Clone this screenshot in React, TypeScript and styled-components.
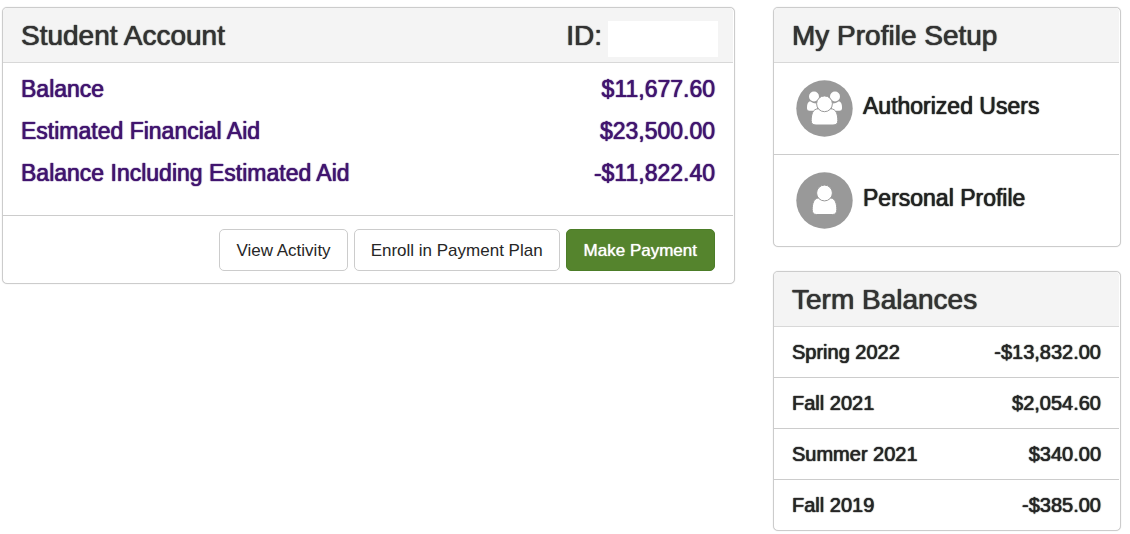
import React from "react";
import styled, { createGlobalStyle } from "styled-components";

const GlobalStyle = createGlobalStyle`
  *, *::before, *::after { box-sizing: border-box; }
  body {
    margin: 0;
    background: #fff;
    color: #262626;
    font-family: "Liberation Sans", Arial, sans-serif;
  }
`;

const mediumWeight = "0 0 1px currentColor, 0 0 1px currentColor";

const Page = styled.main`
  display: grid;
  grid-template-columns: minmax(0, 733fr) minmax(0, 348fr);
  align-items: start;
  gap: 38px;
  padding: 7px 9px 3px 2px;
`;

const Column = styled.div`
  display: flex;
  flex-direction: column;
  gap: 24px;
`;

const Card = styled.section`
  padding-right: 1px;
  background: #fff;
  border: 1px solid #ccc;
  border-radius: 5px;
  box-shadow: 0 0 1px #ccc;
`;

const CardHeader = styled.header`
  display: flex;
  align-items: center;
  justify-content: space-between;
  height: 55px;
  padding: 2px 15px 0 18px;
  background: #f4f4f4;
  border-bottom: 1px solid #d8d8d8;
  border-radius: 4px 4px 0 0;
`;

const Title = styled.h2`
  margin: 0;
  color: #333;
  font-size: 28px;
  line-height: 36px;
  font-weight: 400;
  text-shadow: ${mediumWeight};
`;

const IdGroup = styled.div`
  display: flex;
  align-items: center;
  gap: 6px;
`;

const IdValue = styled.span`
  width: 110px;
  height: 36px;
  margin-top: 6px;
  background: #fff;
`;

const BalanceTable = styled.table`
  width: 100%;
  margin: 5px 0 21px;
  border-collapse: collapse;
  color: #41146f;
  font-size: 23px;
  line-height: 26px;
  text-shadow: ${mediumWeight};

  th, td { padding: 8px 18px; }
  th { font-weight: 400; text-align: left; }
  td { text-align: right; }
`;

const Actions = styled.footer`
  display: flex;
  justify-content: flex-end;
  gap: 6px;
  padding: 13px 18px 12px;
  border-top: 1px solid #ccc;
`;

const Button = styled.button<{ $primary?: boolean }>`
  height: 42px;
  padding: 2px ${(p) => (p.$primary ? 17 : 16)}px 0;
  border: 1px solid ${(p) => (p.$primary ? "#4c7d28" : "#ccc")};
  border-radius: 5px;
  background: ${(p) => (p.$primary ? "#55842d" : "#fff")};
  color: ${(p) => (p.$primary ? "#fff" : "#262626")};
  font-family: inherit;
  font-size: 17px;
  line-height: 24px;
  text-shadow: ${(p) => (p.$primary ? "0 0 1px currentColor" : "none")};
  white-space: nowrap;
  cursor: pointer;
`;

const ProfileList = styled.ul`
  margin: 0;
  padding: 0;
  list-style: none;

  li + li { border-top: 1px solid #ccc; }
`;

const ProfileLink = styled.a`
  display: flex;
  gap: 10px;
  padding: 17px 22px;
  color: #222;
  font-size: 23px;
  line-height: 52px;
  text-decoration: none;
  text-shadow: ${mediumWeight};

  svg { flex: none; width: 57px; height: 57px; }
`;

const TermTable = styled.table`
  width: 100%;
  border-collapse: collapse;
  font-size: 20px;
  line-height: 24px;
  text-shadow: ${mediumWeight};

  th, td { padding: 13px 18px; }
  th { font-weight: 400; text-align: left; }
  td { text-align: right; }
  tr + tr { border-top: 1px solid #ccc; }
`;

const UsersIcon = () => (
  <svg viewBox="0 0 57 57" aria-hidden="true">
    <circle cx="28.5" cy="28.5" r="28.2" fill="#999" />
    <g fill="#fff">
      <circle cx="18" cy="16.5" r="5" />
      <circle cx="39" cy="16.5" r="5" />
      <path d="M14 21.2C12 21.8 11 24 11 27V28.5Q11 30.8 13.5 30.8H21V23.5Q18 24 14 21.2Z" />
      <path d="M43 21.2C45 21.8 46 24 46 27V28.5Q46 30.8 43.5 30.8H36V23.5Q39 24 43 21.2Z" />
    </g>
    <g fill="#fff" stroke="#999" strokeWidth="1">
      <path d="M22 28.8C17 29 15.2 34 15.2 40.5Q15.2 45 20 45H37Q41.8 45 41.8 40.5C41.8 34 40 29 35 28.8Z" />
      <circle cx="28.5" cy="23.8" r="7.9" />
    </g>
  </svg>
);

const UserIcon = () => (
  <svg viewBox="0 0 57 57" aria-hidden="true">
    <circle cx="28.5" cy="28.5" r="28.2" fill="#999" />
    <g fill="#fff" stroke="#999" strokeWidth="1">
      <path d="M22 26C18 26.5 16.2 31.5 16.2 37.5Q16.2 42.5 20.5 42.5H36.5Q40.8 42.5 40.8 37.5C40.8 31.5 39 26.5 35 26Z" />
      <circle cx="28.5" cy="21" r="7.9" />
    </g>
  </svg>
);

const balances = [
  ["Balance", "$11,677.60"],
  ["Estimated Financial Aid", "$23,500.00"],
  ["Balance Including Estimated Aid", "-$11,822.40"],
];

const terms = [
  ["Spring 2022", "-$13,832.00"],
  ["Fall 2021", "$2,054.60"],
  ["Summer 2021", "$340.00"],
  ["Fall 2019", "-$385.00"],
];

const Rows = ({ items }: { items: string[][] }) => (
  <tbody>
    {items.map(([label, amount]) => (
      <tr key={label}>
        <th scope="row">{label}</th>
        <td>{amount}</td>
      </tr>
    ))}
  </tbody>
);

export default function App() {
  return (
    <>
      <GlobalStyle />
      <Page>
        <Card>
          <CardHeader>
            <Title>Student Account</Title>
            <IdGroup>
              <Title as="span">ID:</Title>
              <IdValue />
            </IdGroup>
          </CardHeader>
          <BalanceTable>
            <Rows items={balances} />
          </BalanceTable>
          <Actions>
            <Button type="button">View Activity</Button>
            <Button type="button">Enroll in Payment Plan</Button>
            <Button type="button" $primary>Make Payment</Button>
          </Actions>
        </Card>
        <Column>
          <Card>
            <CardHeader>
              <Title>My Profile Setup</Title>
            </CardHeader>
            <ProfileList>
              <li>
                <ProfileLink href="#authorized-users">
                  <UsersIcon />
                  Authorized Users
                </ProfileLink>
              </li>
              <li>
                <ProfileLink href="#personal-profile">
                  <UserIcon />
                  Personal Profile
                </ProfileLink>
              </li>
            </ProfileList>
          </Card>
          <Card>
            <CardHeader>
              <Title>Term Balances</Title>
            </CardHeader>
            <TermTable>
              <Rows items={terms} />
            </TermTable>
          </Card>
        </Column>
      </Page>
    </>
  );
}
